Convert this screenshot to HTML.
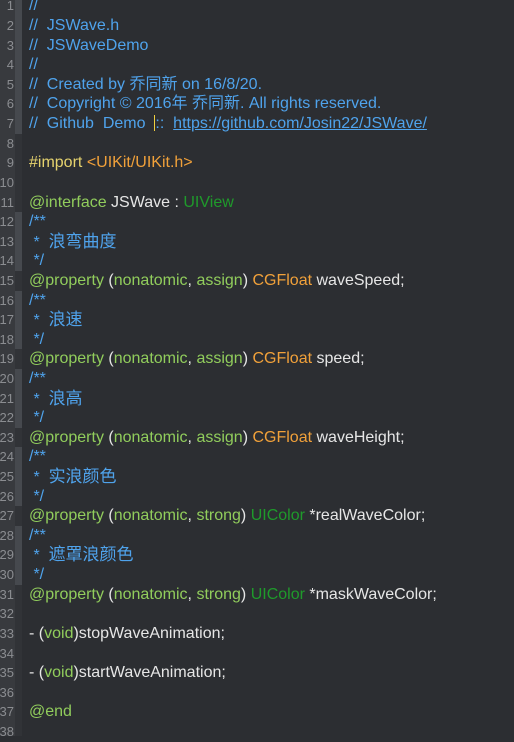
<!DOCTYPE html>
<html><head><meta charset="utf-8"><style>
html,body{margin:0;padding:0;}
body{width:514px;height:736px;background:#2c2e32;overflow:hidden;position:relative;font-family:"Liberation Sans","Noto Sans CJK SC",sans-serif;font-size:16px;}
#g{position:absolute;left:0;top:0;width:15px;height:736px;background:#383a3e;}
#s{position:absolute;left:15px;top:0;width:7px;height:736px;background:#313337;}
#lines{position:absolute;left:0;top:-3.6px;width:514px;}
.l{position:relative;width:514px;height:19.62px;line-height:19.62px;white-space:pre;}
.n{position:absolute;left:-2px;width:16px;text-align:right;color:#8b8d91;font-size:13px;}
.m{position:absolute;left:15px;top:0;width:7px;height:100%;background:#46494e;}
.t{position:absolute;left:29px;color:#e6e6e6;}
.c{color:#4fa3ec}.k{color:#91cd5c}.p{color:#1f9a2b}.o{color:#f1a13a}.y{color:#e6d36e}
.z{font-size:17px}
a{color:#4fa3ec;text-decoration:underline}
.cur{display:inline-block;width:1px;height:16px;background:#f0d040;vertical-align:-3px;}
</style></head><body>
<div id="g"></div><div id="s"></div>
<div id="lines">
<div class="l"><span class="n">1</span><span class="m"></span><span class="t"><span class="c">//</span></span></div>
<div class="l"><span class="n">2</span><span class="m"></span><span class="t"><span class="c">//  JSWave.h</span></span></div>
<div class="l"><span class="n">3</span><span class="m"></span><span class="t"><span class="c">//  JSWaveDemo</span></span></div>
<div class="l"><span class="n">4</span><span class="m"></span><span class="t"><span class="c">//</span></span></div>
<div class="l"><span class="n">5</span><span class="m"></span><span class="t"><span class="c">//  Created by 乔同新 on 16/8/20.</span></span></div>
<div class="l"><span class="n">6</span><span class="m"></span><span class="t"><span class="c">//  Copyright © 2016年 乔同新. All rights reserved.</span></span></div>
<div class="l"><span class="n">7</span><span class="m"></span><span class="t"><span class="c">//  Github  Demo  <span class="cur"></span>::  <a>https://github.com/Josin22/JSWave/</a></span></span></div>
<div class="l"><span class="n">8</span></div>
<div class="l"><span class="n">9</span><span class="t"><span class="y">#import</span> <span class="o">&lt;UIKit/UIKit.h&gt;</span></span></div>
<div class="l"><span class="n">10</span></div>
<div class="l"><span class="n">11</span><span class="t"><span class="k">@interface</span> JSWave : <span class="p">UIView</span></span></div>
<div class="l"><span class="n">12</span><span class="m"></span><span class="t"><span class="c">/**</span></span></div>
<div class="l"><span class="n">13</span><span class="m"></span><span class="t"><span class="c"> *  <span class="z">浪弯曲度</span></span></span></div>
<div class="l"><span class="n">14</span><span class="m"></span><span class="t"><span class="c"> */</span></span></div>
<div class="l"><span class="n">15</span><span class="t"><span class="k">@property</span> (<span class="k">nonatomic</span>, <span class="k">assign</span>) <span class="o">CGFloat</span> waveSpeed;</span></div>
<div class="l"><span class="n">16</span><span class="m"></span><span class="t"><span class="c">/**</span></span></div>
<div class="l"><span class="n">17</span><span class="m"></span><span class="t"><span class="c"> *  <span class="z">浪速</span></span></span></div>
<div class="l"><span class="n">18</span><span class="m"></span><span class="t"><span class="c"> */</span></span></div>
<div class="l"><span class="n">19</span><span class="t"><span class="k">@property</span> (<span class="k">nonatomic</span>, <span class="k">assign</span>) <span class="o">CGFloat</span> speed;</span></div>
<div class="l"><span class="n">20</span><span class="m"></span><span class="t"><span class="c">/**</span></span></div>
<div class="l"><span class="n">21</span><span class="m"></span><span class="t"><span class="c"> *  <span class="z">浪高</span></span></span></div>
<div class="l"><span class="n">22</span><span class="m"></span><span class="t"><span class="c"> */</span></span></div>
<div class="l"><span class="n">23</span><span class="t"><span class="k">@property</span> (<span class="k">nonatomic</span>, <span class="k">assign</span>) <span class="o">CGFloat</span> waveHeight;</span></div>
<div class="l"><span class="n">24</span><span class="m"></span><span class="t"><span class="c">/**</span></span></div>
<div class="l"><span class="n">25</span><span class="m"></span><span class="t"><span class="c"> *  <span class="z">实浪颜色</span></span></span></div>
<div class="l"><span class="n">26</span><span class="m"></span><span class="t"><span class="c"> */</span></span></div>
<div class="l"><span class="n">27</span><span class="t"><span class="k">@property</span> (<span class="k">nonatomic</span>, <span class="k">strong</span>) <span class="p">UIColor</span> *realWaveColor;</span></div>
<div class="l"><span class="n">28</span><span class="m"></span><span class="t"><span class="c">/**</span></span></div>
<div class="l"><span class="n">29</span><span class="m"></span><span class="t"><span class="c"> *  <span class="z">遮罩浪颜色</span></span></span></div>
<div class="l"><span class="n">30</span><span class="m"></span><span class="t"><span class="c"> */</span></span></div>
<div class="l"><span class="n">31</span><span class="t"><span class="k">@property</span> (<span class="k">nonatomic</span>, <span class="k">strong</span>) <span class="p">UIColor</span> *maskWaveColor;</span></div>
<div class="l"><span class="n">32</span></div>
<div class="l"><span class="n">33</span><span class="t">- (<span class="k">void</span>)stopWaveAnimation;</span></div>
<div class="l"><span class="n">34</span></div>
<div class="l"><span class="n">35</span><span class="t">- (<span class="k">void</span>)startWaveAnimation;</span></div>
<div class="l"><span class="n">36</span></div>
<div class="l"><span class="n">37</span><span class="t"><span class="k">@end</span></span></div>
<div class="l"><span class="n">38</span></div>
</div>
</body></html>
